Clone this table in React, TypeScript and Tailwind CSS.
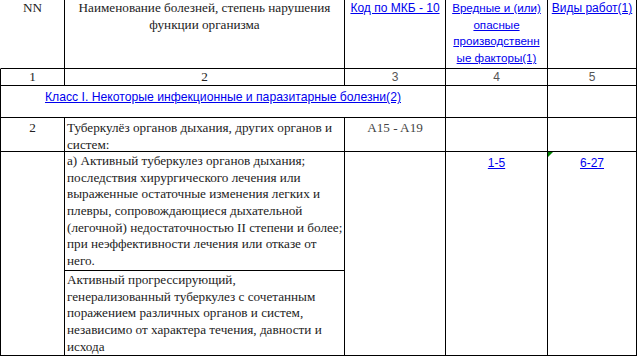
import React from "react";

const serif = "font-['Liberation_Serif',_'Times_New_Roman',_serif] text-[13.2px] text-[#222]";
const sansF = "font-['Liberation_Sans',_Arial,_sans-serif]";
const link = "text-[#0000ee] underline";
const cell = "border-r border-b border-black leading-[16.67px] overflow-visible";

export default function App() {
  return (
    <div className="w-[638px] h-[357px] bg-white overflow-hidden">
      <div className="grid w-[637px] grid-cols-[65px_280px_101px_102px_89px] grid-rows-[69px_17px_32px_34px_119px_85px]">
        {/* header */}
        <div className={`${cell} border-l border-l-transparent text-center pt-0 ${serif}`}>NN</div>
        <div className={`${cell} text-center pt-0 ${serif}`}>
          Наименование болезней, степень нарушения
          <br />
          функции организма
        </div>
        <div className={`${cell} text-center pt-0 ${sansF} text-[12px]`}>
          <span className={link}>Код по МКБ - 10</span>
        </div>
        <div className={`${cell} text-center pt-0 ${sansF} text-[11.6px] leading-[16.9px]`}>
          <span className={link}>
            Вредные и (или)
            <br />
            опасные
            <br />
            производственн
            <br />
            ые факторы(1)
          </span>
        </div>
        <div className={`${cell} text-center pt-0 ${sansF} text-[12px]`}>
          <span className={link}>Виды работ(1)</span>
        </div>

        {/* numbers */}
        <div className={`${cell} border-l text-center ${serif} leading-[16px]`}>1</div>
        <div className={`${cell} text-center ${serif} leading-[16px]`}>2</div>
        <div className={`${cell} text-center ${sansF} text-[12px] text-[#555] leading-[16px]`}>3</div>
        <div className={`${cell} text-center ${sansF} text-[12px] text-[#555] leading-[16px]`}>4</div>
        <div className={`${cell} text-center ${sansF} text-[12px] text-[#555] leading-[16px]`}>5</div>

        {/* class row */}
        <div className={`${cell} border-l col-span-3 text-center pt-[3px] ${sansF} text-[12.2px]`}>
          <span className={link}>
            Класс I. Некоторые инфекционные и паразитарные болезни(2)
          </span>
        </div>
        <div className={cell}></div>
        <div className={cell}></div>

        {/* row 2 */}
        <div className={`${cell} border-l text-center pt-[2px] ${serif}`}>2</div>
        <div className={`${cell} pl-[2px] pt-[2px] ${serif}`}>
          Туберкулёз органов дыхания, других органов и
          <br />
          систем:
        </div>
        <div className={`${cell} text-center pt-[2px] ${serif} text-[#444]`}>A15 - A19</div>
        <div className={cell}></div>
        <div className={cell}></div>

        {/* row a / b */}
        <div className={`${cell} border-l row-span-2 col-start-1 row-start-5`}></div>
        <div className={`${cell} col-start-2 row-start-5 pl-[2px] pt-[1px] ${serif}`}>
          а) Активный туберкулез органов дыхания;
          <br />
          последствия хирургического лечения или
          <br />
          выраженные остаточные изменения легких и
          <br />
          плевры, сопровождающиеся дыхательной
          <br />
          (легочной) недостаточностью II степени и более;
          <br />
          при неэффективности лечения или отказе от
          <br />
          него.
        </div>
        <div className={`${cell} col-start-2 row-start-6 pl-[2px] pt-[1px] ${serif}`}>
          Активный прогрессирующий,
          <br />
          генерализованный туберкулез с сочетанным
          <br />
          поражением различных органов и систем,
          <br />
          независимо от характера течения, давности и
          <br />
          исхода
        </div>
        <div className={`${cell} row-span-2 col-start-3 row-start-5`}></div>
        <div className={`${cell} row-span-2 col-start-4 row-start-5 text-center pt-[3px] ${sansF} text-[12px]`}>
          <span className={link}>1-5</span>
        </div>
        <div className={`${cell} row-span-2 col-start-5 row-start-5 relative text-center pt-[3px] ${sansF} text-[12px]`}>
          <span className="absolute left-0 top-0 w-0 h-0 border-t-[5px] border-r-[5px] border-t-[#008000] border-r-transparent" />
          <span className={link}>6-27</span>
        </div>
      </div>
    </div>
  );
}
